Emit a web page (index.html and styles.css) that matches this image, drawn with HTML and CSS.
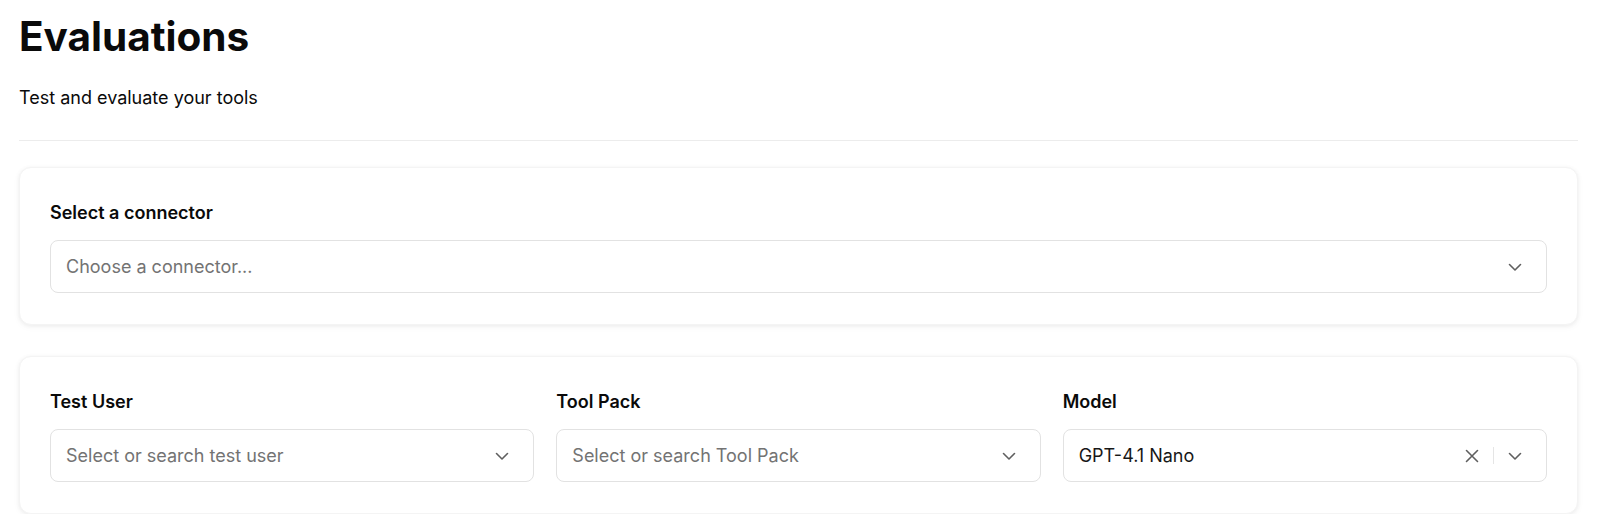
FILE: index.html
```html
<!DOCTYPE html>
<html lang="en">
<head>
<meta charset="utf-8">
<title>Evaluations</title>
<link rel="stylesheet" href="styles.css">
</head>
<body>
<main class="page">
  <header class="header">
    <h1 class="title">Evaluations</h1>
    <p class="subtitle">Test and evaluate your tools</p>
  </header>
  <hr class="divider">

  <section class="card">
    <div class="field">
      <label class="label">Select a connector</label>
      <div class="select">
        <span class="placeholder">Choose a connector...</span>
        <span class="indicators">
          <svg class="icon chevron" viewBox="0 0 20 20" width="20" height="20"><path d="M4.5 7.5 10 13l5.5-5.5"/></svg>
        </span>
      </div>
    </div>
  </section>

  <section class="card">
    <div class="grid">
      <div class="field">
        <label class="label">Test User</label>
        <div class="select">
          <span class="placeholder">Select or search test user</span>
          <span class="indicators">
            <svg class="icon chevron" viewBox="0 0 20 20" width="20" height="20"><path d="M4.5 7.5 10 13l5.5-5.5"/></svg>
          </span>
        </div>
      </div>
      <div class="field">
        <label class="label">Tool Pack</label>
        <div class="select">
          <span class="placeholder">Select or search Tool Pack</span>
          <span class="indicators">
            <svg class="icon chevron" viewBox="0 0 20 20" width="20" height="20"><path d="M4.5 7.5 10 13l5.5-5.5"/></svg>
          </span>
        </div>
      </div>
      <div class="field">
        <label class="label">Model</label>
        <div class="select">
          <span class="value">GPT-4.1 Nano</span>
          <span class="indicators">
            <svg class="icon clear" viewBox="0 0 20 20" width="20" height="20"><path d="M4.5 4.5l11 11M15.5 4.5l-11 11"/></svg>
            <span class="sep"></span>
            <svg class="icon chevron" viewBox="0 0 20 20" width="20" height="20"><path d="M4.5 7.5 10 13l5.5-5.5"/></svg>
          </span>
        </div>
      </div>
    </div>
  </section>
</main>
</body>
</html>
```

FILE: styles.css
```css
* { box-sizing: border-box; }

html, body {
  margin: 0;
  background: #ffffff;
}

body {
  font-family: Inter, "Noto Sans", "Liberation Sans", sans-serif;
  color: #0a0a0a;
}

.page {
  padding: 17px 22px 0 19px;
}

.title {
  margin: 0;
  font-size: 40.5px;
  line-height: 40px;
  font-weight: 700;
  color: #0a0a0a;
}

.subtitle {
  margin: 27px 0 0 0;
  font-size: 18px;
  line-height: 28px;
  color: #0a0a0a;
}

.divider {
  margin: 28px 0 0 0;
  border: 0;
  height: 1px;
  background: #ececec;
}

.card {
  margin-top: 26px;
  background: #ffffff;
  border: 1px solid #f4f4f4;
  border-radius: 12px;
  padding: 31px 30px 31px 30px;
  box-shadow: 0 1px 4px rgba(0, 0, 0, 0.06), 0 2px 8px rgba(0, 0, 0, 0.03);
}

.card + .card {
  margin-top: 31px;
}

.grid {
  display: grid;
  grid-template-columns: repeat(3, 1fr);
  gap: 22px;
}

.field {
  display: flex;
  flex-direction: column;
  gap: 13px;
}

.label {
  font-size: 18px;
  line-height: 28px;
  font-weight: 600;
  color: #0a0a0a;
}

.select {
  height: 53px;
  display: flex;
  align-items: center;
  border: 1px solid #e2e2e2;
  border-radius: 8px;
  background: #ffffff;
  padding: 0 21px 0 15px;
}

.placeholder,
.value {
  flex: 1;
  font-size: 18px;
  line-height: 28px;
}

.placeholder { color: #737373; }
.value { color: #171717; }

.indicators {
  display: flex;
  align-items: center;
  gap: 11px;
}

.icon {
  display: block;
  fill: none;
  stroke: #5f5f5f;
  stroke-width: 1.6;
  stroke-linecap: round;
  stroke-linejoin: round;
}

.sep {
  width: 1px;
  height: 17px;
  background: #e5e5e5;
}
```
